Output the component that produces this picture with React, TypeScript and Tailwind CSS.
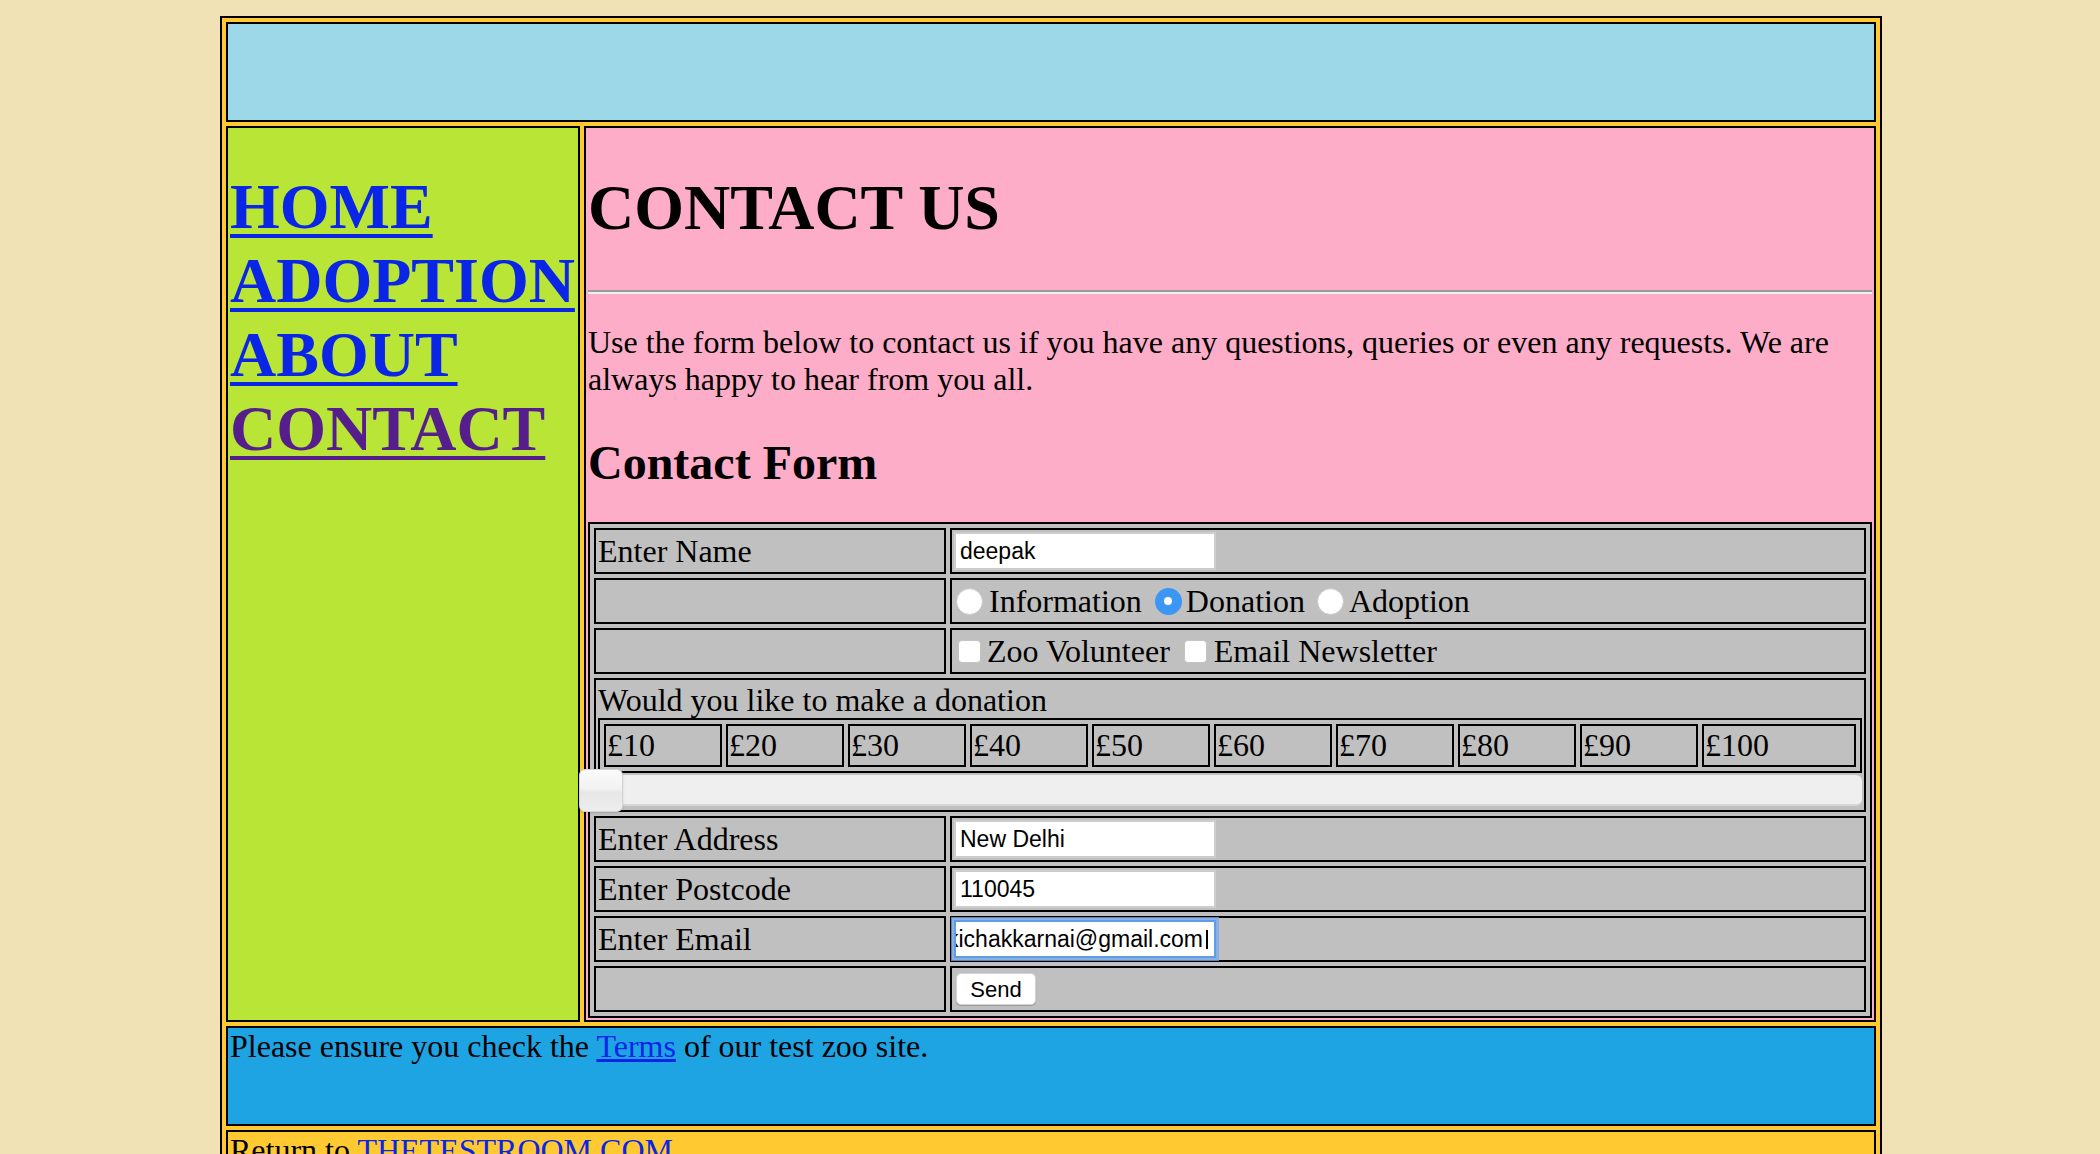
import React from "react";

const sans = "font-['Liberation_Sans',Arial,sans-serif]";
const linkBlue = "text-[#0b25e6]";

const amounts = ["£10", "£20", "£30", "£40", "£50", "£60", "£70", "£80", "£90", "£100"];

const Radio = ({ checked = false, className = "" }: { checked?: boolean; className?: string }) => {
  if (checked) {
    return (
      <span className={`flex h-[27px] w-[27px] shrink-0 items-center justify-center rounded-full bg-[#3c97f4] ${className}`}>
        <span className="h-[8px] w-[8px] rounded-full bg-white" />
      </span>
    );
  }
  return (
    <span
      className={`h-[27px] w-[27px] shrink-0 rounded-full border border-[#c8c8c8] bg-white shadow-[inset_0_1px_1px_rgba(0,0,0,0.06)] ${className}`}
    />
  );
};

const Checkbox = ({ className = "" }: { className?: string }) => (
  <span className={`h-[23px] w-[23px] shrink-0 rounded-[4px] border border-[#c4c4c4] bg-white ${className}`} />
);

const TextBox = ({ value }: { value: string }) => (
  <div
    className={`flex h-[38px] w-[262px] items-center border-2 border-[#cdcdcd] bg-white px-[4px] text-[23px] text-black ${sans}`}
  >
    {value}
  </div>
);

const FormRow = ({ label = "", children }: { label?: string; children?: React.ReactNode }) => (
  <div className="flex h-[46px] gap-[4px]">
    <div className="flex w-[352px] shrink-0 items-center border-2 border-black p-[2px] leading-[37px]">{label}</div>
    <div className="flex flex-1 items-center border-2 border-black p-[2px]">{children}</div>
  </div>
);

export default function App() {
  return (
    <div className="min-h-screen bg-[#f0e2b5] pb-[16px] pt-[16px] font-['Liberation_Serif','Times_New_Roman',serif] text-[32px] text-black">
      <div className="ml-[220px] flex w-[1662px] flex-col gap-[4px] border-2 border-black bg-[#ffc932] p-[4px]">
        {/* banner */}
        <div className="h-[100px] border-2 border-black bg-[#9dd8e8]" />

        <div className="flex gap-[4px]">
          {/* side nav */}
          <nav className="w-[354px] shrink-0 border-2 border-black bg-[#b8e536] p-[2px]">
            <div className="mt-[40px] flex flex-col items-start text-[64px] font-bold leading-[74px]">
              <a href="#" className={`${linkBlue} underline decoration-4 underline-offset-[6px]`}>HOME</a>
              <a href="#" className={`${linkBlue} underline decoration-4 underline-offset-[6px]`}>ADOPTION</a>
              <a href="#" className={`${linkBlue} underline decoration-4 underline-offset-[6px]`}>ABOUT</a>
              <a href="#" className="text-[#551e8c] underline decoration-4 underline-offset-[6px]">CONTACT</a>
            </div>
          </nav>

          {/* content */}
          <main className="flex-1 border-2 border-black bg-[#fdadc8] p-[2px]">
            <h1 className="mt-[41px] text-[64px] font-bold leading-[74px]">CONTACT US</h1>
            <div className="mt-[45px] border-b-2 border-t-2 border-b-[#eeeeee] border-t-[#9a9a9a]" />
            <p className="mt-[30px] leading-[37px]">
              Use the form below to contact us if you have any questions, queries or even any requests. We are always
              happy to hear from you all.
            </p>
            <h2 className="mt-[37px] text-[48px] font-bold leading-[55px]">Contact Form</h2>

            <div className="mt-[32px] flex flex-col gap-[4px] border-2 border-black bg-[#c0c0c0] p-[4px]">
              <FormRow label="Enter Name">
                <TextBox value="deepak" />
              </FormRow>

              <FormRow>
                <div className="flex items-center leading-[37px]">
                  <Radio className="ml-[2px] mr-[6px]" />
                  <span>Information</span>
                  <Radio checked className="ml-[13px] mr-[4px]" />
                  <span>Donation</span>
                  <Radio className="ml-[12px] mr-[5px]" />
                  <span>Adoption</span>
                </div>
              </FormRow>

              <FormRow>
                <div className="flex items-center leading-[37px]">
                  <Checkbox className="ml-[4px] mr-[6px]" />
                  <span>Zoo Volunteer</span>
                  <Checkbox className="ml-[14px] mr-[7px]" />
                  <span>Email Newsletter</span>
                </div>
              </FormRow>

              {/* donation row */}
              <div className="border-2 border-black p-[2px]">
                <div className="leading-[36px]">Would you like to make a donation</div>
                <div className="flex gap-[4px] border-2 border-black p-[4px]">
                  {amounts.map((a, i) => (
                    <div
                      key={a}
                      className={`${i === amounts.length - 1 ? "flex-1" : "w-[118px] shrink-0"} border-2 border-black px-[1px] py-[2px] leading-[35px]`}
                    >
                      {a}
                    </div>
                  ))}
                </div>
                <div className="relative h-[33px]">
                  <div className="mt-[2px] h-[31px] rounded-r-[6px] border-b-2 border-b-[#d6d6d6] bg-[#efefef]" />
                  <div className="absolute left-[-19px] top-[-6px] z-10 h-[43px] w-[44px] rounded-[6px] border border-[#d4d4d4] bg-[linear-gradient(#fbfbfb_0%,#f2f2f2_45%,#e7e7e7_55%,#ededed_100%)] shadow-[0_1px_2px_rgba(0,0,0,0.15)]" />
                </div>
              </div>

              <FormRow label="Enter Address">
                <TextBox value="New Delhi" />
              </FormRow>
              <FormRow label="Enter Postcode">
                <TextBox value="110045" />
              </FormRow>
              <FormRow label="Enter Email">
                <div
                  className={`flex h-[38px] w-[262px] items-center justify-end overflow-hidden whitespace-nowrap border-2 border-[#5e9ee9] bg-white pr-[6px] text-[23px] shadow-[0_0_0_3px_rgba(120,172,238,0.75)] ${sans}`}
                >
                  <span className="shrink-0">deepakichakkarnai@gmail.com</span>
                  <span className="ml-[3px] h-[19px] w-[2px] shrink-0 bg-black" />
                </div>
              </FormRow>
              <FormRow>
                <div
                  className={`ml-[2px] flex h-[32px] w-[80px] items-center justify-center rounded-[5px] border border-[#d3d3d3] bg-white text-[22px] shadow-[0_1px_1px_rgba(0,0,0,0.2)] ${sans}`}
                >
                  Send
                </div>
              </FormRow>
            </div>
          </main>
        </div>

        {/* footer */}
        <div className="h-[100px] border-2 border-black bg-[#1ea3e3] p-[2px] leading-[33px]">
          Please ensure you check the{" "}
          <a href="#" className={`${linkBlue} underline`}>
            Terms
          </a>{" "}
          of our test zoo site.
        </div>
        <div className="h-[100px] border-2 border-black p-[2px] leading-[33px]">
          Return to{" "}
          <a href="#" className={`${linkBlue} underline`}>
            THETESTROOM.COM
          </a>
        </div>
      </div>
    </div>
  );
}
